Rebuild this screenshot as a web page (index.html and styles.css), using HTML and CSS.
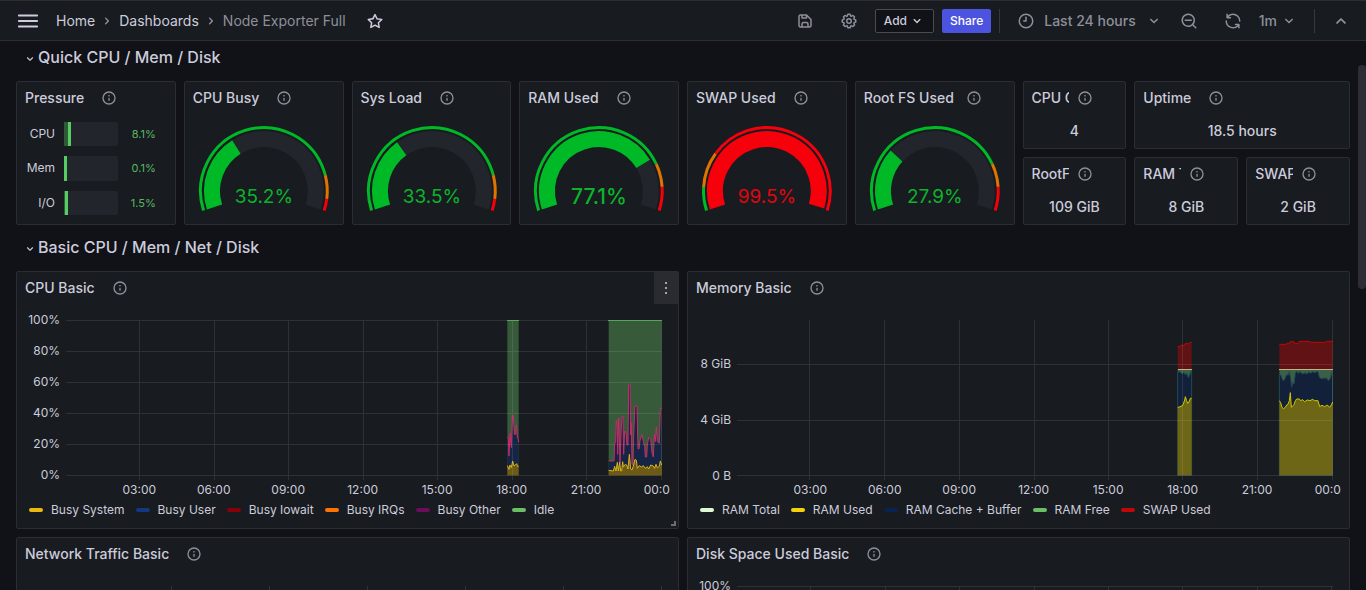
FILE: index.html
```
<!DOCTYPE html>
<html lang="en">
<head>
<meta charset="utf-8">
<meta name="viewport" content="width=device-width, initial-scale=1">
<title>Node Exporter Full - Dashboards</title>
<link rel="stylesheet" href="styles.css">
</head>
<body>
<svg class="symbols" aria-hidden="true">
  <symbol id="i-menu" viewBox="0 0 24 24"><path d="M2 5h20a1 1 0 0 1 0 2H2a1 1 0 0 1 0-2zm0 6h20a1 1 0 0 1 0 2H2a1 1 0 0 1 0-2zm0 6h20a1 1 0 0 1 0 2H2a1 1 0 0 1 0-2z"/></symbol>
  <symbol id="i-down" viewBox="0 0 24 24"><path d="M17,9.170a1,1,0,0,0-1.410,0L12,12.710,8.460,9.170a1,1,0,0,0-1.410,0,1,1,0,0,0,0,1.420l4.240,4.240a1,1,0,0,0,1.420,0L17,10.590A1,1,0,0,0,17,9.170Z"/></symbol>
  <symbol id="i-info" viewBox="0 0 24 24"><path d="M12,2A10,10,0,1,0,22,12,10,10,0,0,0,12,2Zm0,18a8,8,0,1,1,8-8A8,8,0,0,1,12,20Zm0-8.500a1,1,0,0,0-1,1v3a1,1,0,0,0,2,0v-3A1,1,0,0,0,12,11.500Zm0-4a1.250,1.250,0,1,0,1.250,1.250A1.250,1.250,0,0,0,12,7.500Z"/></symbol>
  <symbol id="i-star" viewBox="0 0 24 24"><path d="M22,9.670A1,1,0,0,0,21.140,9l-5.690-.83L12.900,3a1,1,0,0,0-1.800,0L8.550,8.160,2.860,9a1,1,0,0,0-.81.68,1,1,0,0,0,.25,1l4.130,4-1,5.680A1,1,0,0,0,6.900,21.440L12,18.770l5.100,2.670a.93.93,0,0,0,.46.12,1,1,0,0,0,.59-.19,1,1,0,0,0,.4-1l-1-5.680,4.130-4A1,1,0,0,0,22,9.670Zm-6.150,4a1,1,0,0,0-.29.88l.72,4.200-3.760-2a1.060,1.060,0,0,0-.94,0l-3.760,2,.72-4.200a1,1,0,0,0-.29-.88l-3-3,4.210-.61a1,1,0,0,0,.76-.55L12,5.700l1.880,3.820a1,1,0,0,0,.76.55l4.210.61Z"/></symbol>
  <symbol id="i-save" viewBox="0 0 24 24"><path d="m20.710 9.290l-6-6a1 1 0 0 0-.32-.21A1.090 1.090 0 0 0 14 3H6a3 3 0 0 0-3 3v12a3 3 0 0 0 3 3h12a3 3 0 0 0 3-3v-8a1 1 0 0 0-.29-.71M9 5h4v2H9Zm6 14H9v-3a1 1 0 0 1 1-1h4a1 1 0 0 1 1 1Zm4-1a1 1 0 0 1-1 1h-1v-3a3 3 0 0 0-3-3h-4a3 3 0 0 0-3 3v3H6a1 1 0 0 1-1-1V6a1 1 0 0 1 1-1h1v3a1 1 0 0 0 1 1h6a1 1 0 0 0 1-1V6.410l4 4Z"/></symbol>
  <symbol id="i-cog" viewBox="0 0 24 24"><path d="m21.320 9.550l-1.890-.63l.89-1.780A1 1 0 0 0 20.130 6L18 3.870a1 1 0 0 0-1.150-.19l-1.780.89l-.63-1.890A1 1 0 0 0 13.500 2h-3a1 1 0 0 0-.95.68l-.63 1.890l-1.780-.89A1 1 0 0 0 6 3.870L3.870 6a1 1 0 0 0-.19 1.150l.89 1.780l-1.890.63a1 1 0 0 0-.68.94v3a1 1 0 0 0 .68.95l1.890.63l-.89 1.780A1 1 0 0 0 3.870 18L6 20.130a1 1 0 0 0 1.150.19l1.780-.89l.63 1.890a1 1 0 0 0 .95.68h3a1 1 0 0 0 .95-.68l.63-1.890l1.780.89a1 1 0 0 0 1.130-.19L20.130 18a1 1 0 0 0 .19-1.150l-.89-1.780l1.890-.63a1 1 0 0 0 .68-.94v-3a1 1 0 0 0-.68-.95M20 12.780l-1.200.4A2 2 0 0 0 17.640 16l.57 1.140l-1.100 1.100l-1.110-.6a2 2 0 0 0-2.790 1.160l-.4 1.200h-1.590l-.4-1.200A2 2 0 0 0 8 17.640l-1.140.57l-1.100-1.100l.6-1.110a2 2 0 0 0-1.160-2.820l-1.200-.4v-1.560l1.200-.4A2 2 0 0 0 6.360 8l-.57-1.110l1.100-1.100L8 6.360a2 2 0 0 0 2.820-1.160l.4-1.200h1.560l.4 1.200A2 2 0 0 0 16 6.360l1.140-.57l1.100 1.100l-.6 1.110a2 2 0 0 0 1.160 2.790l1.200.4ZM12 8a4 4 0 1 0 4 4a4 4 0 0 0-4-4m0 6a2 2 0 1 1 2-2a2 2 0 0 1-2 2"/></symbol>
  <symbol id="i-clock" viewBox="0 0 24 24"><path d="M12 6a1 1 0 0 0-1 1v4H9a1 1 0 0 0 0 2h3a1 1 0 0 0 1-1V7a1 1 0 0 0-1-1m0-4a10 10 0 1 0 10 10A10 10 0 0 0 12 2m0 18a8 8 0 1 1 8-8a8 8 0 0 1-8 8"/></symbol>
  <symbol id="i-zoom" viewBox="0 0 24 24"><path d="M21.710 20.290L18 16.610A9 9 0 1 0 16.610 18l3.680 3.680a1 1 0 0 0 1.420 0a1 1 0 0 0 0-1.390M11 18a7 7 0 1 1 7-7a7 7 0 0 1-7 7m4-8H7a1 1 0 0 0 0 2h8a1 1 0 0 0 0-2"/></symbol>
  <symbol id="i-sync" viewBox="0 0 24 24"><path d="M19.910 15.510h-4.530a1 1 0 0 0 0 2h2.400A8 8 0 0 1 4 12a1 1 0 1 0-2 0a10 10 0 0 0 16.880 7.230V21a1 1 0 0 0 2 0v-4.500a1 1 0 0 0-.97-.99M12 2a10 10 0 0 0-6.880 2.770V3a1 1 0 0 0-2 0v4.500a1 1 0 0 0 1 1h4.500a1 1 0 0 0 0-2h-2.400A8 8 0 0 1 20 12a1 1 0 0 0 2 0A10 10 0 0 0 12 2"/></symbol>
  <symbol id="i-dots" viewBox="0 0 24 24"><path d="M10.500 3h3v3h-3zM10.500 10.500h3v3h-3zM10.500 18h3v3h-3z"/></symbol>
</svg>

<header class="topbar">
  <button class="menu-button" type="button" aria-label="Open menu"><svg class="icon icon-lg"><use href="#i-menu"/></svg></button>
  <nav class="crumbs" aria-label="Breadcrumbs">
    <a href="#">Home</a>
    <svg class="icon crumb-arrow"><use href="#i-down"/></svg>
    <a href="#">Dashboards</a>
    <svg class="icon crumb-arrow"><use href="#i-down"/></svg>
    <span class="current">Node Exporter Full</span>
  </nav>
  <button class="star-button" type="button" aria-label="Mark as favorite"><svg class="icon icon-md"><use href="#i-star"/></svg></button>
  <div class="toolbar">
    <button class="icon-button" type="button" aria-label="Save dashboard"><svg class="icon icon-md"><use href="#i-save"/></svg></button>
    <button class="icon-button" type="button" aria-label="Dashboard settings"><svg class="icon icon-md"><use href="#i-cog"/></svg></button>
    <button class="button button-outline" type="button">Add <svg class="icon"><use href="#i-down"/></svg></button>
    <button class="button button-primary" type="button">Share</button>
    <span class="divider"></span>
    <div class="group">
      <button class="picker picker-time" type="button"><svg class="icon icon-md"><use href="#i-clock"/></svg><span>Last 24 hours</span><svg class="icon icon-md"><use href="#i-down"/></svg></button>
      <button class="icon-button" type="button" aria-label="Zoom out time range"><svg class="icon icon-md"><use href="#i-zoom"/></svg></button>
    </div>
    <div class="group">
      <button class="icon-button" type="button" aria-label="Refresh"><svg class="icon icon-md"><use href="#i-sync"/></svg></button>
      <button class="picker picker-refresh" type="button"><span>1m</span><svg class="icon icon-md"><use href="#i-down"/></svg></button>
    </div>
    <span class="divider"></span>
    <button class="icon-button" type="button" aria-label="Hide toolbar"><svg class="icon icon-up"><use href="#i-down"/></svg></button>
  </div>
</header>

<main class="scroller">
  <div class="dash">
    <button class="row-title" type="button"><svg class="icon icon-sm"><use href="#i-down"/></svg><span>Quick CPU / Mem / Disk</span></button>

    <section class="panel span-3 tall">
      <header class="panel-head"><h2>Pressure</h2><svg class="icon"><use href="#i-info"/></svg></header>
      <div class="bars">
        <span class="bar-name">CPU</span><div class="bar"><div class="bar-fill" style="width:8.1%"></div></div><span class="bar-value">8.1%</span>
        <span class="bar-name">Mem</span><div class="bar"><div class="bar-fill" style="width:0.1%"></div></div><span class="bar-value">0.1%</span>
        <span class="bar-name">I/O</span><div class="bar"><div class="bar-fill" style="width:1.5%"></div></div><span class="bar-value">1.5%</span>
      </div>
    </section>

    <section class="panel span-3 tall">
      <header class="panel-head"><h2>CPU Busy</h2><svg class="icon"><use href="#i-info"/></svg></header>
      <svg class="gauge" viewBox="0 0 142 94">
        <g transform="rotate(162 71 69)">
          <circle class="arc track" cx="71" cy="69" r="52" pathLength="360" stroke-dasharray="0 76 140 360"/>
          <circle class="arc good" cx="71" cy="69" r="52" pathLength="360" stroke-dasharray="76 360"/>
          <circle class="rim good" cx="71" cy="69" r="63.500" pathLength="360" stroke-dasharray="183.600 360"/>
          <circle class="rim warn" cx="71" cy="69" r="63.500" pathLength="360" stroke-dasharray="0 183.600 21.600 360"/>
          <circle class="rim bad" cx="71" cy="69" r="63.500" pathLength="360" stroke-dasharray="0 205.200 10.800 360"/>
        </g>
        <text class="gauge-text good-text" x="71" y="81">35.2%</text>
      </svg>
    </section>

    <section class="panel span-3 tall">
      <header class="panel-head"><h2>Sys Load</h2><svg class="icon"><use href="#i-info"/></svg></header>
      <svg class="gauge" viewBox="0 0 142 94">
        <g transform="rotate(162 71 69)">
          <circle class="arc track" cx="71" cy="69" r="52" pathLength="360" stroke-dasharray="0 72.400 143.600 360"/>
          <circle class="arc good" cx="71" cy="69" r="52" pathLength="360" stroke-dasharray="72.400 360"/>
          <circle class="rim good" cx="71" cy="69" r="63.500" pathLength="360" stroke-dasharray="183.600 360"/>
          <circle class="rim warn" cx="71" cy="69" r="63.500" pathLength="360" stroke-dasharray="0 183.600 21.600 360"/>
          <circle class="rim bad" cx="71" cy="69" r="63.500" pathLength="360" stroke-dasharray="0 205.200 10.800 360"/>
        </g>
        <text class="gauge-text good-text" x="71" y="81">33.5%</text>
      </svg>
    </section>

    <section class="panel span-3 tall">
      <header class="panel-head"><h2>RAM Used</h2><svg class="icon"><use href="#i-info"/></svg></header>
      <svg class="gauge" viewBox="0 0 142 94">
        <g transform="rotate(162 71 69)">
          <circle class="arc track" cx="71" cy="69" r="52" pathLength="360" stroke-dasharray="0 166.500 49.500 360"/>
          <circle class="arc good" cx="71" cy="69" r="52" pathLength="360" stroke-dasharray="166.500 360"/>
          <circle class="rim good" cx="71" cy="69" r="63.500" pathLength="360" stroke-dasharray="172.800 360"/>
          <circle class="rim warn" cx="71" cy="69" r="63.500" pathLength="360" stroke-dasharray="0 172.800 21.600 360"/>
          <circle class="rim bad" cx="71" cy="69" r="63.500" pathLength="360" stroke-dasharray="0 194.400 21.600 360"/>
        </g>
        <text class="gauge-text gauge-text-lg good-text" x="71" y="82">77.1%</text>
      </svg>
    </section>

    <section class="panel span-3 tall">
      <header class="panel-head"><h2>SWAP Used</h2><svg class="icon"><use href="#i-info"/></svg></header>
      <svg class="gauge" viewBox="0 0 142 94">
        <g transform="rotate(162 71 69)">
          <circle class="arc bad" cx="71" cy="69" r="52" pathLength="360" stroke-dasharray="215 360"/>
          <circle class="rim good" cx="71" cy="69" r="63.500" pathLength="360" stroke-dasharray="21.600 360"/>
          <circle class="rim warn" cx="71" cy="69" r="63.500" pathLength="360" stroke-dasharray="0 21.600 32.400 360"/>
          <circle class="rim bad" cx="71" cy="69" r="63.500" pathLength="360" stroke-dasharray="0 54 162 360"/>
        </g>
        <text class="gauge-text bad-text" x="71" y="81">99.5%</text>
      </svg>
    </section>

    <section class="panel span-3 tall">
      <header class="panel-head"><h2>Root FS Used</h2><svg class="icon"><use href="#i-info"/></svg></header>
      <svg class="gauge" viewBox="0 0 142 94">
        <g transform="rotate(162 71 69)">
          <circle class="arc track" cx="71" cy="69" r="52" pathLength="360" stroke-dasharray="0 60.300 155.700 360"/>
          <circle class="arc good" cx="71" cy="69" r="52" pathLength="360" stroke-dasharray="60.300 360"/>
          <circle class="rim good" cx="71" cy="69" r="63.500" pathLength="360" stroke-dasharray="172.800 360"/>
          <circle class="rim warn" cx="71" cy="69" r="63.500" pathLength="360" stroke-dasharray="0 172.800 21.600 360"/>
          <circle class="rim bad" cx="71" cy="69" r="63.500" pathLength="360" stroke-dasharray="0 194.400 21.600 360"/>
        </g>
        <text class="gauge-text good-text" x="71" y="81">27.9%</text>
      </svg>
    </section>

    <section class="panel span-2 short">
      <header class="panel-head"><h2>CPU Cores</h2><svg class="icon"><use href="#i-info"/></svg></header>
      <p class="stat">4</p>
    </section>
    <section class="panel span-4 short">
      <header class="panel-head"><h2>Uptime</h2><svg class="icon"><use href="#i-info"/></svg></header>
      <p class="stat">18.5 hours</p>
    </section>
    <section class="panel span-2 short">
      <header class="panel-head"><h2>RootFS Total</h2><svg class="icon"><use href="#i-info"/></svg></header>
      <p class="stat">109 GiB</p>
    </section>
    <section class="panel span-2 short">
      <header class="panel-head"><h2>RAM Total</h2><svg class="icon"><use href="#i-info"/></svg></header>
      <p class="stat">8 GiB</p>
    </section>
    <section class="panel span-2 short">
      <header class="panel-head"><h2>SWAP Total</h2><svg class="icon"><use href="#i-info"/></svg></header>
      <p class="stat">2 GiB</p>
    </section>

    <button class="row-title" type="button"><svg class="icon icon-sm"><use href="#i-down"/></svg><span>Basic CPU / Mem / Net / Disk</span></button>

    <section class="panel span-12 chart-panel">
      <header class="panel-head"><h2>CPU Basic</h2><svg class="icon"><use href="#i-info"/></svg></header>
      <button class="panel-menu" type="button" aria-label="Panel menu"><svg class="icon"><use href="#i-dots"/></svg></button>
      <div class="chart">
        <div class="y-axis"><span>100%</span><span>80%</span><span>60%</span><span>40%</span><span>20%</span><span>0%</span></div>
        <div class="plot">
          <svg class="canvas" viewBox="0 0 597 160" preserveAspectRatio="none">
            <g transform="translate(415 -55) scale(.33333)">
              <path fill="#375a3b" d="M82 165H116V631H82ZM386 165H545V631H386Z"/>
              <path fill="#162445" d="M82 631V518H85L87 573 90 505 94 548 97 452H100L103 508H107L109 480 112 518H114L116 532V631ZM386 631V588H402L404 533H407L409 466H411L413 568 416 458 420 595 423 507 426 455H429L431 568 434 498 438 503 441 540H444L446 357H450L452 510 454 475 456 598H459L461 510 465 423H471L474 552H477L480 527 486 509 490 530 494 545 496 576H500L502 540 506 518 512 522 516 562 520 576 523 508 526 530 529 486 532 530 538 535 541 431H545V631Z"/>
              <path fill="#6e5a14" d="M82 631V602L87 613 90 600 94 608 98 588 102 603 106 600 110 596 113 605 116 603V631ZM386 631V616L400 618 404 604 408 618 412 592 415 618 419 592 422 618H425L428 590 430 606 436 598 440 600 444 612 448 568 452 612 456 615 460 603 465 583 469 586 472 610 478 602 484 606 490 602 496 610 502 605 506 612 512 600 520 603 524 610 528 598 532 608 538 604 541 588 545 600V631Z"/>
              <path class="line" stroke="#c42d68" d="M82 518H85L87 573 90 505 94 548 97 452H100L103 508H107L109 480 112 518H114L116 532M386 588H402L404 533H407L409 466H411L413 568 416 458 420 595 423 507 426 455H429L431 568 434 498 438 503 441 540H444L446 357H450L452 510 454 475 456 598H459L461 510 465 423H471L474 552H477L480 527 486 509 490 530 494 545 496 576H500L502 540 506 518 512 522 516 562 520 576 523 508 526 530 529 486 532 530 538 535 541 431H545"/>
              <path class="line" stroke="#d8b41c" d="M82 602L87 613 90 600 94 608 98 588 102 603 106 600 110 596 113 605 116 603M386 616L400 618 404 604 408 618 412 592 415 618 419 592 422 618H425L428 590 430 606 436 598 440 600 444 612 448 568 452 612 456 615 460 603 465 583 469 586 472 610 478 602 484 606 490 602 496 610 502 605 506 612 512 600 520 603 524 610 528 598 532 608 538 604 541 588 545 600"/>
            </g>
            <path class="grid" d="M1 .5H597M1 31.500H597M1 62.500H597M1 93.500H597M1 124.500H597M1 155.500H597M74.500 0V160M149.500 0V160M223.500 0V160M298.500 0V160M372.500 0V160M447.500 0V160M521.500 0V160M596.500 0V160"/>
            <path class="grid-top" stroke="#5ba45b" d="M442 .5H454M543 .5H597"/>
          </svg>
          <div class="x-axis"><span>03:00</span><span>06:00</span><span>09:00</span><span>12:00</span><span>15:00</span><span>18:00</span><span>21:00</span><span>00:00</span></div>
        </div>
      </div>
      <ul class="legend">
        <li><i class="swatch c-system"></i>Busy System</li>
        <li><i class="swatch c-user"></i>Busy User</li>
        <li><i class="swatch c-iowait"></i>Busy Iowait</li>
        <li><i class="swatch c-irqs"></i>Busy IRQs</li>
        <li><i class="swatch c-other"></i>Busy Other</li>
        <li><i class="swatch c-idle"></i>Idle</li>
      </ul>
      <span class="resize"></span>
    </section>

    <section class="panel span-12 chart-panel">
      <header class="panel-head"><h2>Memory Basic</h2><svg class="icon"><use href="#i-info"/></svg></header>
      <div class="chart">
        <div class="y-axis y-axis-wide"><span>8 GiB</span><span>4 GiB</span><span>0 B</span></div>
        <div class="plot">
          <svg class="canvas" viewBox="0 0 597 160" preserveAspectRatio="none">
            <g transform="translate(424 -10) scale(.33333)">
              <path fill="#601214" d="M53 178V110H60L62 106H70L76 101H86L90 97H95V178ZM358 178V103H378L382 100H388L391 95H402L405 101H413L418 94H450L453 97H498L500 94H518V178Z"/>
              <path fill="#3b6045" d="M53 178H95V300H53ZM358 178H518V300H358Z"/>
              <path class="line line-filled" stroke="#1d4a55" d="M53 496V187L60 185 66 192 72 187 76 195 80 190 85 203 90 192 95 183V496ZM358 496V190L363 197 369 212 374 208 380 193 384 196 388 185 392 205 395 232 398 218 402 222 406 190 410 183 415 190 420 185 428 192 436 188 440 193 446 186 452 190 458 185 464 188 470 185H474L478 202 484 206 490 205 500 204 505 212 511 205 515 190 518 183V496Z"/>
              <path fill="#6e6617" d="M53 496V293L60 290 66 288 70 282 74 270 76 260 80 272 83 280 87 276 91 265H95V496ZM358 496V272L362 278 366 292 370 296 376 292 380 285 384 283 388 272 391 248 394 292 398 288 402 284 406 272 410 267H418L422 272 428 269 434 275 442 270 450 272 458 268 464 272H474L479 290 486 286 494 290 502 285 509 292 514 285 518 276V496Z"/>
              <path class="line" stroke="#d2c600" d="M53 293L60 290 66 288 70 282 74 270 76 260 80 272 83 280 87 276 91 265H95M358 272L362 278 366 292 370 296 376 292 380 285 384 283 388 272 391 248 394 292 398 288 402 284 406 272 410 267H418L422 272 428 269 434 275 442 270 450 272 458 268 464 272H474L479 290 486 286 494 290 502 285 509 292 514 285 518 276"/>
              <path class="line" stroke="#c80606" d="M53 110H60L62 106H70L76 101H86L90 97H95M358 103H378L382 100H388L391 95H402L405 101H413L418 94H450L453 97H498L500 94H518"/>
            </g>
            <path class="grid" d="M1 44.500H597M1 100.500H597M1 155.500H597M73.500 0V160M148.500 0V160M223.500 0V160M298.500 0V160M372.500 0V160M446.500 0V160M521.500 0V160M596.500 0V160"/>
            <path class="grid-top" stroke="#c2b489" d="M442 49.500H456M543 49.500H597"/>
          </svg>
          <div class="x-axis"><span>03:00</span><span>06:00</span><span>09:00</span><span>12:00</span><span>15:00</span><span>18:00</span><span>21:00</span><span>00:00</span></div>
        </div>
      </div>
      <ul class="legend">
        <li><i class="swatch c-total"></i>RAM Total</li>
        <li><i class="swatch c-used"></i>RAM Used</li>
        <li><i class="swatch c-cache"></i>RAM Cache + Buffer</li>
        <li><i class="swatch c-idle"></i>RAM Free</li>
        <li><i class="swatch c-swap"></i>SWAP Used</li>
      </ul>
    </section>

    <section class="panel span-12 chart-panel">
      <header class="panel-head"><h2>Network Traffic Basic</h2><svg class="icon"><use href="#i-info"/></svg></header>
      <div class="chart">
        <div class="y-axis"></div>
        <div class="plot">
          <svg class="canvas" viewBox="0 0 597 160" preserveAspectRatio="none">
            <path class="grid" d="M9 155.500H597M106.500 0V160M204.500 0V160M302.500 0V160M400.500 0V160M498.500 0V160M596.500 0V160"/>
          </svg>
        </div>
      </div>
    </section>

    <section class="panel span-12 chart-panel">
      <header class="panel-head"><h2>Disk Space Used Basic</h2><svg class="icon"><use href="#i-info"/></svg></header>
      <div class="chart">
        <div class="y-axis"><span>100%</span><span>80%</span><span>60%</span><span>40%</span><span>20%</span><span>0%</span></div>
        <div class="plot">
          <svg class="canvas" viewBox="0 0 597 160" preserveAspectRatio="none">
            <path class="grid" d="M1 .5H597M1 31.500H597M1 62.500H597M1 93.500H597M1 124.500H597M1 155.500H597M74.500 0V160M149.500 0V160M223.500 0V160M298.500 0V160M372.500 0V160M446.500 0V160M521.500 0V160M595.500 0V160"/>
          </svg>
        </div>
      </div>
    </section>
  </div>
  <div class="thumb"></div>
</main>
</body>
</html>
```
FILE: styles.css
```
* {
  box-sizing: border-box;
}

body {
  margin: 0;
  height: 100vh;
  display: flex;
  flex-direction: column;
  overflow: hidden;
  background: #111217;
  color: #ccccdc;
  font: 14px/20px Inter, "Liberation Sans", sans-serif;
}

button {
  display: flex;
  align-items: center;
  justify-content: center;
  margin: 0;
  padding: 0;
  border: 0;
  background: none;
  color: inherit;
  font: inherit;
  cursor: pointer;
}

a {
  color: inherit;
  text-decoration: none;
}

.symbols {
  position: absolute;
  width: 0;
  height: 0;
}

.icon {
  flex: none;
  width: 16px;
  height: 16px;
  fill: currentColor;
}

.icon-sm {
  width: 14px;
  height: 14px;
}

.icon-md {
  width: 18px;
  height: 18px;
}

.icon-lg {
  width: 22px;
  height: 22px;
}

.icon-up {
  width: 22px;
  height: 22px;
  transform: rotate(180deg);
}

/* Top bar */

.topbar {
  flex: none;
  display: flex;
  align-items: center;
  height: 41px;
  padding: 0 7px 0 17px;
  background: #181b1f;
  border-top: 1px solid #2b2d33;
  border-bottom: 1px solid #2b2d33;
}

.crumbs {
  display: flex;
  align-items: center;
  gap: 4px;
  margin-left: 17px;
  white-space: nowrap;
}

.crumb-arrow {
  color: #9192a0;
  transform: rotate(-90deg);
}

.current {
  color: #8e8f9c;
}

.star-button {
  margin-left: 20px;
}

.toolbar {
  display: flex;
  align-items: center;
  gap: 8px;
  margin-left: auto;
  color: #8e8f9c;
}

.group {
  display: flex;
}

.icon-button {
  width: 36px;
  height: 24px;
}

.button {
  height: 24px;
  padding: 0 8px;
  border-radius: 2px;
  font-size: 12px;
  font-weight: 500;
}

.button-outline {
  gap: 2px;
  border: 1px solid #4a4b52;
  background: #111217;
  color: #ccccdc;
}

.button-primary {
  background: #4b53df;
  color: #fff;
}

.divider {
  width: 1px;
  height: 24px;
  background: #36383e;
}

.picker {
  font-weight: 500;
}

.picker-time {
  gap: 9px;
  padding: 0 8px 0 9px;
}

.picker-refresh {
  gap: 3px;
  padding: 0 8px;
}

/* Dashboard grid */

.scroller {
  position: relative;
  flex: 1;
  min-height: 0;
  overflow: hidden;
  padding: 2px 16px 0;
}

.thumb {
  position: absolute;
  top: 24px;
  right: 0;
  width: 8px;
  height: 224px;
  border-radius: 4px;
  background: #2e2d35;
}

.dash {
  display: grid;
  grid-template-columns: repeat(24, minmax(0, 1fr));
  grid-auto-rows: 30px;
  gap: 8px;
}

.row-title {
  grid-column: 1 / -1;
  justify-content: flex-start;
  gap: 1px;
  padding: 0 0 2px 7px;
  font-size: 16px;
  font-weight: 500;
}

.row-title .icon {
  margin-top: 3px;
}

.panel {
  position: relative;
  display: flex;
  flex-direction: column;
  min-width: 0;
  background: #181b1f;
  border: 1px solid #2b2d32;
  border-radius: 2px;
}

.span-2 { grid-column: span 2; }
.span-3 { grid-column: span 3; }
.span-4 { grid-column: span 4; }
.span-12 { grid-column: span 12; }
.short { grid-row: span 2; }
.tall { grid-row: span 4; }
.chart-panel { grid-row: span 7; }

.panel-head {
  flex: none;
  display: flex;
  align-items: center;
  height: 32px;
  padding: 0 32px 0 8px;
}

.panel-head h2 {
  min-width: 0;
  margin: 0;
  padding-right: 9px;
  overflow: hidden;
  font-size: 14px;
  font-weight: 500;
  white-space: nowrap;
}

.panel-head .icon {
  margin-left: 8px;
  color: #8e8f9c;
}

.panel-menu {
  position: absolute;
  top: 0;
  right: 0;
  width: 24px;
  height: 32px;
  background: #2a2b30;
  color: #a3a4b1;
}

.resize {
  position: absolute;
  right: 2px;
  bottom: 2px;
  width: 5px;
  height: 5px;
  border-right: 2px solid #6c6d72;
  border-bottom: 2px solid #6c6d72;
}

.stat {
  flex: 1;
  display: flex;
  align-items: center;
  justify-content: center;
  margin: 0;
  font-weight: 500;
}

/* Bar gauge */

.bars {
  flex: 1;
  display: grid;
  grid-template-columns: 30px 1fr 28px;
  grid-auto-rows: 1fr;
  column-gap: 10px;
  row-gap: 10px;
  align-items: center;
  padding: 8px 19px 9px 8px;
}

.bar {
  align-self: stretch;
  border-radius: 2px;
  background: #22252b;
}

.bar-fill {
  box-sizing: content-box;
  height: 100%;
  margin-left: -1px;
  border-right: 3px solid #56cc62;
  background: #2e5a38;
}

.bar-name {
  font-size: 12px;
  text-align: right;
}

.bar-value {
  color: #56b862;
  font-size: 11px;
  text-align: right;
}

/* Radial gauge */

.gauge {
  flex: 1;
  min-height: 0;
  margin: 8px;
}

.arc,
.rim {
  fill: none;
}

.arc { stroke-width: 16px; }
.rim { stroke-width: 3px; }
.track { stroke: #22252b; }
.good { stroke: #00b927; }
.warn { stroke: #e07400; }
.bad { stroke: #f5000b; }

.gauge-text {
  font-size: 19px;
  text-anchor: middle;
}

.gauge-text-lg {
  font-size: 21px;
  font-weight: 500;
}

.good-text { fill: #0ab52c; }
.bad-text { fill: #e0060f; }

/* Time series */

.chart {
  flex: none;
  display: flex;
  height: 196px;
  margin: 0 8px;
  overflow: hidden;
}

.y-axis {
  flex: none;
  width: 40px;
  padding-right: 5px;
  font-size: 12px;
  line-height: 31px;
  text-align: right;
}

.y-axis span {
  display: block;
}

.y-axis-wide {
  padding-top: 32px;
  line-height: 56px;
}

.plot {
  flex: 1;
  min-width: 0;
  margin: 16px 8px 0 0;
}

.canvas {
  display: block;
  width: 100%;
  height: 160px;
}

.line {
  fill: none;
  stroke-width: 1px;
  vector-effect: non-scaling-stroke;
}

.line-filled {
  fill: #132039;
}

.grid,
.grid-top {
  fill: none;
  stroke-width: 1px;
  shape-rendering: crispEdges;
}

.grid {
  stroke: rgba(225, 235, 225, 0.11);
}

.x-axis {
  display: flex;
  margin-left: 37px;
  font-size: 12px;
  text-align: center;
}

.x-axis span {
  flex: 0 0 13.300%;
}

.legend {
  display: flex;
  gap: 11px;
  margin: 0;
  padding: 0 12px;
  font-size: 12px;
  list-style: none;
  white-space: nowrap;
}

.legend li {
  display: flex;
  align-items: center;
  gap: 8px;
}

.swatch {
  width: 14px;
  height: 4px;
  border-radius: 2px;
}

.c-system { background: #eab90f; }
.c-user { background: #143880; }
.c-iowait { background: #890009; }
.c-irqs { background: #ff7300; }
.c-other { background: #6d0b5c; }
.c-idle { background: #6bbd68; }
.c-total { background: #dcf9d4; }
.c-used { background: #f2d20a; }
.c-cache { background: #0a2250; }
.c-swap { background: #c00808; }
```
